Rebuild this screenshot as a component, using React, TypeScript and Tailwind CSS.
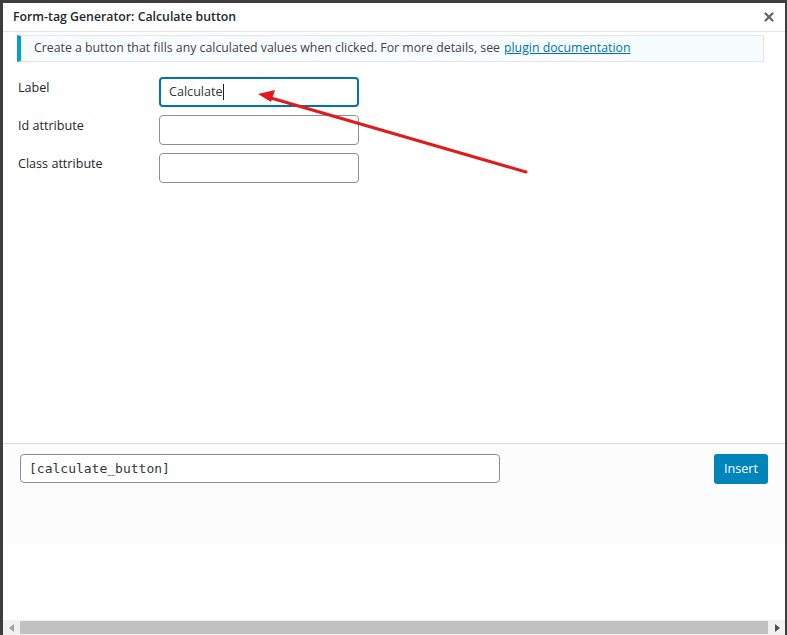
import { X } from "lucide-react";

export default function App() {
  return (
    <div className="w-[787px] h-[635px] bg-[#3d3d3d] pt-[3px] pl-[3px] pr-[2px] overflow-hidden font-['Open_Sans',sans-serif] text-[#444]">
      <div className="relative h-[632px] bg-white flex flex-col">
        {/* Title bar */}
        <div className="h-[29px] flex items-center justify-between border-b border-[#e5e5e5] pl-[10px] pr-[6px]">
          <h1 className="text-[12.3px] font-semibold text-[#23282d]">Form-tag Generator: Calculate button</h1>
          <button className="w-5 h-5 flex items-center justify-center text-[#666]">
            <X className="w-[14px] h-[14px]" strokeWidth={4} />
          </button>
        </div>

        {/* Body */}
        <div className="flex-1 pl-[14px] pr-[21px] pt-[3px]">
          <div className="h-[27px] flex items-center border border-[#e5e5e5] border-l-4 border-l-[#00a0d2] bg-[#f7fcfe] pl-[13px] text-[12.3px]">
            Create a button that fills any calculated values when clicked. For more details, see{" "}
            <a href="#" className="ml-[4px] text-[#0073aa] underline">plugin documentation</a>
          </div>

          <div className="mt-[15px] flex flex-col gap-[8px] pl-[1px]">
            <div className="flex items-start">
              <label className="w-[141px] text-[12.6px] text-[#23282d] pt-[2px]">Label</label>
              <div className="w-[200px] h-[30px] rounded-[4px] border-2 border-[#0073aa] flex items-center pl-[8px] text-[12.6px] text-[#32373c]">
                Calculate<span className="w-px h-[16px] bg-[#222]" />
              </div>
            </div>
            <div className="flex items-start">
              <label className="w-[141px] text-[12.6px] text-[#23282d] pt-[2px]">Id attribute</label>
              <input className="w-[200px] h-[30px] rounded-[4px] border border-[#8c8f94] outline-none" />
            </div>
            <div className="flex items-start">
              <label className="w-[141px] text-[12.6px] text-[#23282d] pt-[2px]">Class attribute</label>
              <input className="w-[200px] h-[30px] rounded-[4px] border border-[#8c8f94] outline-none" />
            </div>
          </div>
        </div>

        {/* Footer */}
        <div className="h-[101px] border-t border-[#dddddd] bg-[#fcfcfc] flex items-start justify-between pl-[17px] pr-[17px] pt-[10px]">
          <input
            readOnly
            value="[calculate_button]"
            className="w-[480px] h-[29px] rounded-[4px] border border-[#8c8f94] bg-white px-[8px] text-[13px] text-[#32373c] font-['DejaVu_Sans_Mono',monospace] outline-none"
          />
          <button className="h-[30px] px-[10px] rounded-[3px] bg-[#0085ba] text-white text-[12.6px]">Insert</button>
        </div>

        <div className="h-[76px] bg-white" />

        {/* Scrollbar */}
        <div className="h-[15px] bg-[#f1f1f1] flex items-center">
          <div className="w-[17px] flex items-center justify-center">
            <svg width="6" height="8" viewBox="0 0 6 8"><path d="M5 0 L0 4 L5 8 Z" fill="#a3a3a3" /></svg>
          </div>
          <div className="flex-1 h-[13px] bg-[#c1c1c1]" />
          <div className="w-[17px] flex items-center justify-center">
            <svg width="6" height="8" viewBox="0 0 6 8"><path d="M1 0 L6 4 L1 8 Z" fill="#505050" /></svg>
          </div>
        </div>

        {/* Red annotation arrow */}
        <svg className="absolute left-0 top-0 pointer-events-none" width="782" height="632">
          <line x1="523" y1="169" x2="268" y2="95" stroke="#e11b1b" strokeWidth="3" strokeLinecap="round" />
          <path d="M255 91 L272 87 L268 99 Z" fill="#e11b1b" />
        </svg>
      </div>
    </div>
  );
}
